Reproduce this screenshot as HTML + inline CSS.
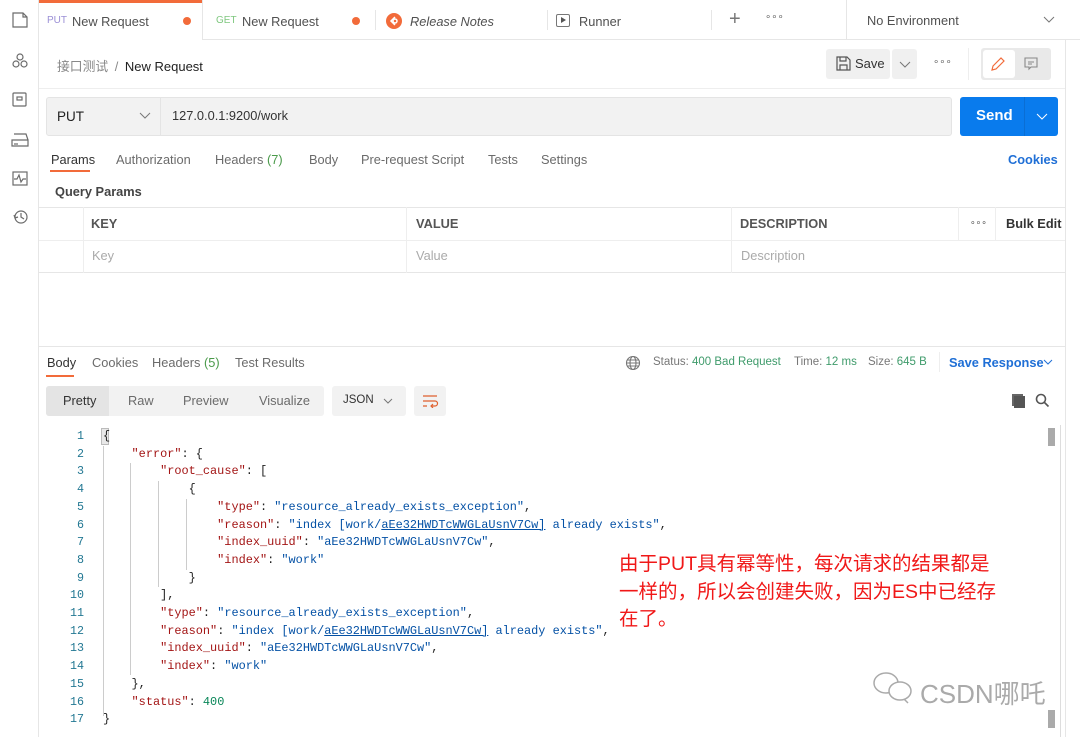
<!DOCTYPE html>
<html><head><meta charset="utf-8"><style>
*{box-sizing:border-box;margin:0;padding:0}
body{width:1080px;height:737px;overflow:hidden;background:#fff;font-family:"Liberation Sans","Noto Sans CJK SC",sans-serif;font-size:12.8px;color:#505050;position:relative}
.a{position:absolute}
.g{color:#6b6b6b}
.code{font-family:"Liberation Mono",monospace;font-size:11.9px;white-space:pre}
.k{color:#a31515}.s{color:#0451a5}.p{color:#222}
.ln{position:absolute;left:40px;width:44px;text-align:right;color:#237893;font-family:"Liberation Mono",monospace;font-size:11.67px}
.vl{position:absolute;width:1px;background:#ccc}
</style></head><body>
<div class="a" style="left:38px;top:0;width:1px;height:737px;background:#e6e6e6"></div>
<svg class="a" style="left:10px;top:10px" width="20" height="220" fill="none" stroke="#6b6b6b" stroke-width="1.2">
<path d="M3 3h10l4 4v10H3z M13 3v4h4"/>
<circle cx="10" cy="47" r="3"/><circle cx="6" cy="54" r="3"/><circle cx="14" cy="54" r="3"/>
<rect x="3" y="83" width="13" height="13" rx="1"/><rect x="7" y="87" width="5" height="3"/>
<path d="M2 130h16v6H2z M4 124h12l2 6 M5 133v2 M7 133v2"/>
<rect x="3" y="162" width="14" height="13"/><path d="M4 169h3l2-4 2 7 2-3h3"/>
<circle cx="11" cy="207" r="6"/><path d="M11 203v4l3 2 M4 205l1 3 3-1"/>
</svg>
<div class="a" style="left:39px;top:0;width:1041px;height:40px;border-bottom:1px solid #e6e6e6"></div>
<div class="a" style="left:39px;top:0;width:163px;height:3px;background:#f26b3a"></div>
<div class="a" style="left:39px;top:3px;width:163px;height:38px;background:#fff"></div>
<div class="a" style="left:202px;top:0;width:1px;height:40px;background:#e6e6e6"></div>
<div class="a" style="left:47px;top:15px;font-size:10px;color:#9b8fd6">PUT</div>
<div class="a" style="left:72px;top:14px">New Request</div>
<div class="a" style="left:183px;top:17px;width:8px;height:8px;border-radius:50%;background:#f26b3a"></div>
<div class="a" style="left:216px;top:15px;font-size:10px;color:#7fc77f">GET</div>
<div class="a" style="left:242px;top:14px">New Request</div>
<div class="a" style="left:352px;top:17px;width:8px;height:8px;border-radius:50%;background:#f26b3a"></div>
<div class="a" style="left:375px;top:10px;width:1px;height:20px;background:#e6e6e6"></div>
<div class="a" style="left:386px;top:13px;width:16px;height:16px;border-radius:50%;background:#f26b3a"></div>
<svg class="a" style="left:386px;top:13px" width="16" height="16" fill="none" stroke="#fff" stroke-width="1.5"><path d="M9 4l-4 4 4 4"/><circle cx="9" cy="8" r="2"/></svg>
<div class="a" style="left:410px;top:14px;font-style:italic">Release Notes</div>
<div class="a" style="left:547px;top:10px;width:1px;height:20px;background:#e6e6e6"></div>
<div class="a" style="left:556px;top:14px;width:14px;height:13px;border:1.3px solid #777;border-radius:2px"></div>
<div class="a" style="left:561px;top:17px;width:0;height:0;border-left:5px solid #555;border-top:3.5px solid transparent;border-bottom:3.5px solid transparent"></div>
<div class="a" style="left:579px;top:14px">Runner</div>
<div class="a" style="left:711px;top:10px;width:1px;height:20px;background:#e6e6e6"></div>
<div class="a" style="left:729px;top:8px;font-size:20px;color:#777">+</div>
<div class="a" style="left:765px;top:12px;font-size:10px;color:#666">∘∘∘</div>
<div class="a" style="left:846px;top:0;width:1px;height:40px;background:#e6e6e6"></div>
<div class="a" style="left:867px;top:13px">No Environment</div>
<svg class="a" style="left:1043px;top:16px" width="12" height="8"><path d="M1 1l5 5 5-5" fill="none" stroke="#777"/></svg>
<div class="a" style="left:1065px;top:40px;width:1px;height:697px;background:#e6e6e6"></div>
<div class="a" style="left:57px;top:56px;color:#888">接口测试 <span style="margin:0 3px">/</span> <span style="color:#222;font-size:13px">New Request</span></div>
<div class="a" style="left:826px;top:49px;width:64px;height:30px;background:#f0f0f0;border-radius:3px"></div>
<svg class="a" style="left:836px;top:56px" width="15" height="15" fill="none" stroke="#555" stroke-width="1.2"><path d="M1 1h10l3 3v10H1z M4 1v4h6V1 M4 14v-5h7v5"/></svg>
<div class="a" style="left:855px;top:56px;color:#333;font-size:13px">Save</div>
<div class="a" style="left:892px;top:49px;width:25px;height:30px;background:#f0f0f0;border-radius:3px"></div>
<svg class="a" style="left:899px;top:61px" width="12" height="8"><path d="M1 1l5 5 5-5" fill="none" stroke="#777"/></svg>
<div class="a" style="left:933px;top:57px;font-size:10px;color:#666">∘∘∘</div>
<div class="a" style="left:968px;top:48px;width:1px;height:32px;background:#eee"></div>
<div class="a" style="left:981px;top:48px;width:70px;height:32px;background:#e9e9e9;border-radius:3px"></div>
<div class="a" style="left:983px;top:50px;width:32px;height:28px;background:#fff;border-radius:3px"></div>
<svg class="a" style="left:990px;top:56px" width="16" height="16" fill="none" stroke="#f26b3a" stroke-width="1.2"><path d="M2 14l1-4 8-8 3 3-8 8z"/></svg>
<svg class="a" style="left:1023px;top:56px" width="16" height="16" fill="none" stroke="#888" stroke-width="1.1"><path d="M2 2h12v9H8l-2 2v-2H2z M5 6h6 M5 8h4"/></svg>
<div class="a" style="left:39px;top:88px;width:1026px;height:1px;background:#eee"></div>
<div class="a" style="left:46px;top:97px;width:906px;height:39px;background:#f2f2f2;border:1px solid #e4e4e4;border-radius:3px"></div>
<div class="a" style="left:160px;top:98px;width:1px;height:37px;background:#e4e4e4"></div>
<div class="a" style="left:57px;top:109px;color:#222;font-size:13.5px">PUT</div>
<svg class="a" style="left:139px;top:112px" width="12" height="8"><path d="M1 1l5 5 5-5" fill="none" stroke="#777"/></svg>
<div class="a" style="left:172px;top:108px;color:#333">127.0.0.1:9200/work</div>
<div class="a" style="left:960px;top:97px;width:98px;height:39px;background:#097bed;border-radius:3px"></div>
<div class="a" style="left:1024px;top:97px;width:1px;height:39px;background:#0a6ed4"></div>
<div class="a" style="left:976px;top:107px;color:#fff;font-weight:bold;font-size:15px">Send</div>
<svg class="a" style="left:1036px;top:113px" width="12" height="8"><path d="M1 1l5 5 5-5" fill="none" stroke="#fff"/></svg>
<div class="a" style="left:51px;top:152px;color:#333">Params</div>
<div class="a" style="left:50px;top:170px;width:40px;height:2px;background:#f26b3a"></div>
<div class="a g" style="left:116px;top:152px">Authorization</div>
<div class="a g" style="left:215px;top:152px">Headers <span style="color:#4a9a4a">(7)</span></div>
<div class="a g" style="left:309px;top:152px">Body</div>
<div class="a g" style="left:361px;top:152px">Pre-request Script</div>
<div class="a g" style="left:488px;top:152px">Tests</div>
<div class="a g" style="left:541px;top:152px">Settings</div>
<div class="a" style="left:1008px;top:152px;color:#1f6fd6;font-weight:bold">Cookies</div>
<div class="a" style="left:55px;top:184px;color:#444;font-weight:bold">Query Params</div>
<div class="a" style="left:39px;top:207px;width:1026px;height:66px;border-top:1px solid #e6e6e6;border-bottom:1px solid #e6e6e6"></div>
<div class="a" style="left:39px;top:240px;width:1026px;height:1px;background:#eee"></div>
<div class="a" style="left:83px;top:207px;width:1px;height:66px;background:#eee"></div>
<div class="a" style="left:406px;top:207px;width:1px;height:66px;background:#eee"></div>
<div class="a" style="left:731px;top:207px;width:1px;height:66px;background:#eee"></div>
<div class="a" style="left:958px;top:207px;width:1px;height:33px;background:#eee"></div>
<div class="a" style="left:995px;top:207px;width:1px;height:33px;background:#eee"></div>
<div class="a" style="left:91px;top:216px;color:#555;font-weight:bold">KEY</div>
<div class="a" style="left:416px;top:216px;color:#555;font-weight:bold">VALUE</div>
<div class="a" style="left:740px;top:216px;color:#555;font-weight:bold">DESCRIPTION</div>
<div class="a" style="left:970px;top:217px;font-size:9px;color:#555">∘∘∘</div>
<div class="a" style="left:1006px;top:216px;color:#333;font-weight:bold">Bulk Edit</div>
<div class="a" style="left:92px;top:248px;color:#aaa">Key</div>
<div class="a" style="left:416px;top:248px;color:#aaa">Value</div>
<div class="a" style="left:741px;top:248px;color:#aaa">Description</div>
<div class="a" style="left:39px;top:346px;width:1026px;height:1px;background:#e6e6e6"></div>
<div class="a" style="left:47px;top:355px;color:#333">Body</div>
<div class="a" style="left:46px;top:375px;width:28px;height:2px;background:#f26b3a"></div>
<div class="a g" style="left:92px;top:355px">Cookies</div>
<div class="a g" style="left:152px;top:355px">Headers <span style="color:#4a9a4a">(5)</span></div>
<div class="a g" style="left:235px;top:355px">Test Results</div>
<svg class="a" style="left:625px;top:355px" width="16" height="16" fill="none" stroke="#777" stroke-width="1.1"><circle cx="8" cy="8" r="6.5"/><ellipse cx="8" cy="8" rx="3" ry="6.5"/><path d="M1.5 8h13 M2.5 5h11 M2.5 11h11"/></svg>
<div class="a" style="left:653px;top:356px;font-size:11.5px;color:#777">Status: <span style="color:#3f9b6b">400 Bad Request</span></div>
<div class="a" style="left:794px;top:356px;font-size:11.5px;color:#777">Time: <span style="color:#3f9b6b">12 ms</span></div>
<div class="a" style="left:868px;top:356px;font-size:11.5px;color:#777">Size: <span style="color:#3f9b6b">645 B</span></div>
<div class="a" style="left:939px;top:352px;width:1px;height:20px;background:#eee"></div>
<div class="a" style="left:949px;top:355px;color:#1f6fd6;font-weight:bold">Save Response</div>
<svg class="a" style="left:1043px;top:359px" width="10" height="7"><path d="M1 1l4 4 4-4" fill="none" stroke="#1f6fd6"/></svg>
<div class="a" style="left:46px;top:386px;width:278px;height:30px;background:#f2f2f2;border-radius:3px"></div>
<div class="a" style="left:46px;top:386px;width:63px;height:30px;background:#e4e4e4;border-radius:3px 0 0 3px"></div>
<div class="a" style="left:63px;top:393px;color:#333">Pretty</div>
<div class="a g" style="left:128px;top:393px">Raw</div>
<div class="a g" style="left:183px;top:393px">Preview</div>
<div class="a g" style="left:259px;top:393px">Visualize</div>
<div class="a" style="left:332px;top:386px;width:74px;height:30px;background:#f2f2f2;border-radius:3px"></div>
<div class="a" style="left:343px;top:394px;color:#333;font-size:11.5px">JSON</div>
<svg class="a" style="left:383px;top:398px" width="10" height="7"><path d="M1 1l4 4 4-4" fill="none" stroke="#777"/></svg>
<div class="a" style="left:414px;top:386px;width:32px;height:30px;background:#f2f2f2;border-radius:3px"></div>
<svg class="a" style="left:421px;top:394px" width="18" height="14" fill="none" stroke="#e0602e" stroke-width="1.2"><path d="M2 2h14 M2 7h12a2.5 2.5 0 0 1 0 5H10 M12 10l-2 2 2 2 M2 12h4"/></svg>
<div class="a" style="left:1012px;top:394px;width:11px;height:12px;background:#666"></div>
<div class="a" style="left:1014px;top:396px;width:11px;height:12px;background:#555"></div>
<svg class="a" style="left:1035px;top:393px" width="15" height="15" fill="none" stroke="#555" stroke-width="1.6"><circle cx="6" cy="6" r="4.5"/><path d="M9.5 9.5l4 4"/></svg>
<div class="a" style="left:1048px;top:428px;width:7px;height:18px;background:#aaa"></div>
<div class="a" style="left:1048px;top:710px;width:7px;height:18px;background:#aaa"></div>
<div class="a" style="left:1060px;top:425px;width:1px;height:312px;background:#ddd"></div>
<div class="vl" style="left:103px;top:446px;height:270px"></div>
<div class="vl" style="left:130px;top:463px;height:212px"></div>
<div class="vl" style="left:158px;top:481px;height:106px"></div>
<div class="vl" style="left:186px;top:499px;height:71px"></div>
<div class="a" style="left:101px;top:428px;width:8px;height:17px;background:#e8e8e8;border:1px solid #bbb"></div>
<div class="a" style="left:40px;top:428px;line-height:17.7px">
<div class="ln" style="top:0;position:relative;left:0">1<br>2<br>3<br>4<br>5<br>6<br>7<br>8<br>9<br>10<br>11<br>12<br>13<br>14<br>15<br>16<br>17</div>
</div>
<div class="a code p" style="left:103px;top:428px;line-height:17.7px">{
    <span class="k">"error"</span>: {
        <span class="k">"root_cause"</span>: [
            {
                <span class="k">"type"</span>: <span class="s">"resource_already_exists_exception"</span>,
                <span class="k">"reason"</span>: <span class="s">"index [work/<u>aEe32HWDTcWWGLaUsnV7Cw]</u> already exists"</span>,
                <span class="k">"index_uuid"</span>: <span class="s">"aEe32HWDTcWWGLaUsnV7Cw"</span>,
                <span class="k">"index"</span>: <span class="s">"work"</span>
            }
        ],
        <span class="k">"type"</span>: <span class="s">"resource_already_exists_exception"</span>,
        <span class="k">"reason"</span>: <span class="s">"index [work/<u>aEe32HWDTcWWGLaUsnV7Cw]</u> already exists"</span>,
        <span class="k">"index_uuid"</span>: <span class="s">"aEe32HWDTcWWGLaUsnV7Cw"</span>,
        <span class="k">"index"</span>: <span class="s">"work"</span>
    },
    <span class="k">"status"</span>: <span class="s" style="color:#098658">400</span>
}</div>
<div class="a" style="left:619px;top:551px;width:400px;color:#f01818;font-size:19.5px;line-height:27.5px">由于PUT具有幂等性，每次请求的结果都是<br>一样的，所以会创建失败，因为ES中已经存<br>在了。</div>
<svg class="a" style="left:871px;top:670px" width="46" height="34" fill="none" stroke="#aaa" stroke-width="1.5"><ellipse cx="15" cy="13" rx="12" ry="10"/><ellipse cx="29" cy="21" rx="11" ry="9" fill="#fff"/><path d="M33 29l4 4"/></svg>
<div class="a" style="left:920px;top:674px;font-size:26px;color:#aaa">CSDN哪吒</div>
</body></html>
